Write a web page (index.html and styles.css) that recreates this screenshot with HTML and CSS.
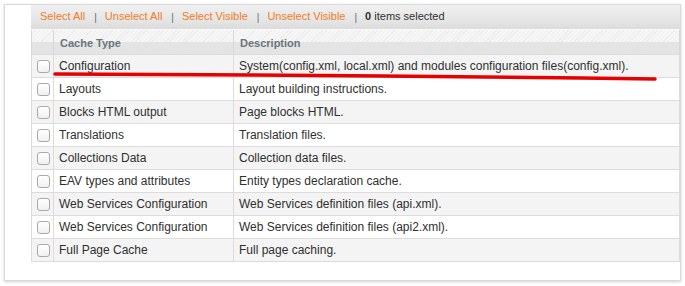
FILE: index.html
```html
<!DOCTYPE html>
<html>
<head>
<meta charset="utf-8">
<link rel="stylesheet" href="styles.css">
</head>
<body>
<div class="card">
  <div class="toolbar">
    <a class="act">Select All</a><span class="sep">|</span>
    <a class="act">Unselect All</a><span class="sep">|</span>
    <a class="act">Select Visible</a><span class="sep">|</span>
    <a class="act">Unselect Visible</a><span class="sep">|</span>
    <span class="count"><b>0</b> items selected</span>
  </div>
  <table class="grid">
    <colgroup><col class="c1"><col class="c2"><col class="c3"></colgroup>
    <thead>
      <tr><th></th><th>Cache Type</th><th>Description</th></tr>
    </thead>
    <tbody>
      <tr class="odd"><td class="chk"><span class="cb"></span></td><td>Configuration</td><td>System(config.xml, local.xml) and modules configuration files(config.xml).</td></tr>
      <tr><td class="chk"><span class="cb"></span></td><td>Layouts</td><td>Layout building instructions.</td></tr>
      <tr class="odd"><td class="chk"><span class="cb"></span></td><td>Blocks HTML output</td><td>Page blocks HTML.</td></tr>
      <tr><td class="chk"><span class="cb"></span></td><td>Translations</td><td>Translation files.</td></tr>
      <tr class="odd"><td class="chk"><span class="cb"></span></td><td>Collections Data</td><td>Collection data files.</td></tr>
      <tr><td class="chk"><span class="cb"></span></td><td>EAV types and attributes</td><td>Entity types declaration cache.</td></tr>
      <tr class="odd"><td class="chk"><span class="cb"></span></td><td>Web Services Configuration</td><td>Web Services definition files (api.xml).</td></tr>
      <tr><td class="chk"><span class="cb"></span></td><td>Web Services Configuration</td><td>Web Services definition files (api2.xml).</td></tr>
      <tr class="odd"><td class="chk"><span class="cb"></span></td><td>Full Page Cache</td><td>Full page caching.</td></tr>
    </tbody>
  </table>
</div>
<svg class="mark" width="685" height="286" viewBox="0 0 685 286">
  <path d="M55,74 Q360,75 655,79" fill="none" stroke="#e60000" stroke-width="3.5" stroke-linecap="round"/>
</svg>
</body>
</html>
```
FILE: styles.css
```css
html, body {
  margin: 0;
  padding: 0;
  background: #fff;
}
body {
  position: relative;
  width: 685px;
  height: 286px;
  overflow: hidden;
  font-family: "Liberation Sans", Arial, Helvetica, sans-serif;
  color: #2f2f2f;
}
.card {
  margin: 4px 0 0 4px;
  border: 1px solid #d9d9d9;
  box-shadow: 0 1px 3px rgba(0,0,0,0.18);
  padding-left: 26px;
  box-sizing: border-box;
  width: 677px;
  height: 277px;
  background: #fff;
}
.toolbar {
  height: 25px;
  box-sizing: border-box;
  padding: 0 0 2px 9px;
  display: flex;
  align-items: center;
  font-size: 11px;
  background: linear-gradient(to bottom, #f0f0f0 0%, #e6e6e6 60%, #dcdcdc 100%);
  border-bottom: 1px solid #fafafa;
}
.act {
  color: #ef7d26;
}
.sep {
  color: #5b6e7a;
  margin: 0 8px 0 9px;
  font-size: 10px;
  position: relative;
  top: 1px;
}
.count {
  color: #2f2f2f;
}
.grid {
  width: 649px;
  border-collapse: collapse;
  table-layout: fixed;
  font-size: 12px;
}
.c1 { width: 22px; }
.c2 { width: 180px; }
.grid th {
  height: 23px;
  padding: 1px 0 0 6px;
  text-align: left;
  font-size: 11px;
  font-weight: bold;
  color: #6b757d;
  border-right: 1px solid #d8d8d8;
  border-left: 1px solid #d8d8d8;
  background:
    linear-gradient(to bottom, rgba(0,0,0,0) 12px, rgba(226,226,226,0.9) 12px),
    repeating-linear-gradient(135deg, #f7f7f7 0 2px, #ececec 2px 3px);
  vertical-align: middle;
}
.grid td {
  height: 22px;
  padding: 0 0 0 5px;
  border: 1px solid #dcdcdc;
  white-space: nowrap;
  overflow: hidden;
  vertical-align: middle;
  line-height: 14px;
}
.grid tr.odd td {
  background: #f4f4f4;
}
.grid td.chk {
  padding: 0 0 0 5px;
}
.cb {
  display: block;
  width: 11px;
  height: 11px;
  border: 1px solid #a9a9a9;
  border-radius: 3px;
  background: linear-gradient(to bottom, #ffffff, #f0f0f0);
  margin-top: 1px;
}
.mark {
  position: absolute;
  left: 0;
  top: 0;
  pointer-events: none;
}
```
